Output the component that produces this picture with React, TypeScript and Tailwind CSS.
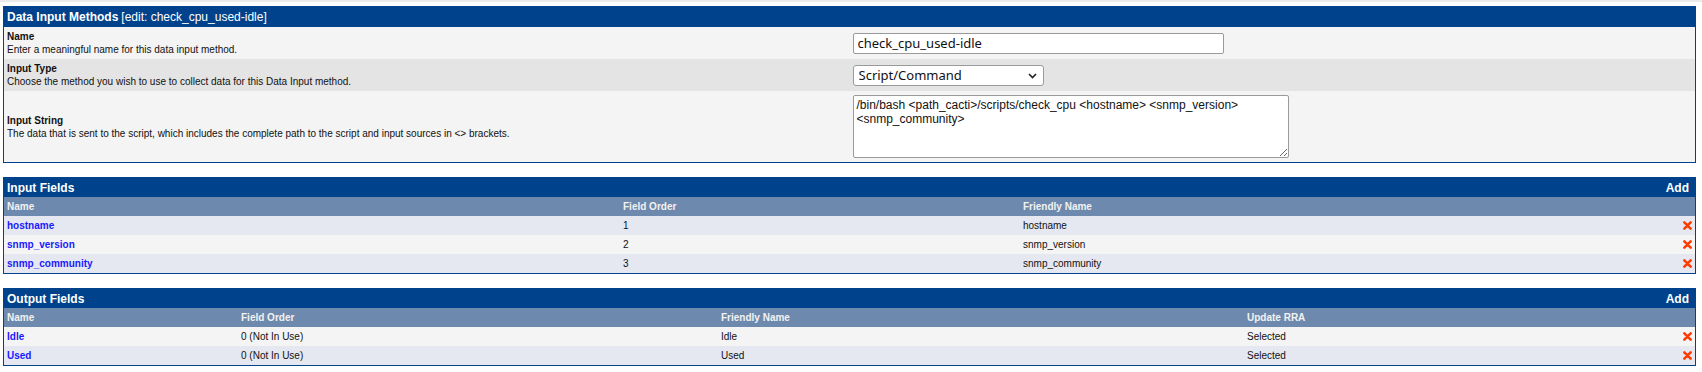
import React from 'react';

const inputFields = [
  { name: 'hostname', order: '1', friendly: 'hostname' },
  { name: 'snmp_version', order: '2', friendly: 'snmp_version' },
  { name: 'snmp_community', order: '3', friendly: 'snmp_community' },
];

const outputFields = [
  { name: 'Idle', order: '0 (Not In Use)', friendly: 'Idle', rra: 'Selected' },
  { name: 'Used', order: '0 (Not In Use)', friendly: 'Used', rra: 'Selected' },
];

function DeleteIcon() {
  return (
    <svg width="9" height="9" viewBox="0 0 10 10" className="block">
      <path d="M1.5 1.5 L8.5 8.5 M8.5 1.5 L1.5 8.5" stroke="#ff3b00" strokeWidth="2.8" strokeLinecap="round" />
    </svg>
  );
}

function PanelTitle({ children, add }: { children: React.ReactNode; add?: boolean }) {
  return (
    <div className="h-[19px] bg-[#00438c] flex items-center justify-between pl-[3px] pr-[6px] text-white text-[12px]">
      <div>{children}</div>
      {add && <span className="font-bold">Add</span>}
    </div>
  );
}

export default function App() {
  const rowBg = (i: number, startOdd: boolean) =>
    (i % 2 === 0) === startOdd ? 'bg-[#e5e8f1]' : 'bg-[#f4f4f4]';

  return (
    <div className="min-h-screen bg-white font-['Liberation_Sans',Arial,sans-serif] text-[10px] text-[#111]">
      <div className="h-[2px] bg-[#ebebeb]" />

      {/* data input method form */}
      <div className="mt-[4px] ml-[3px] mr-[6px] border border-[#00438c]">
        <div className="h-[20px] bg-[#00438c] flex items-center px-[3px] text-white text-[12px]">
          <span className="font-bold">Data Input Methods</span>
          <span className="ml-[3px]">[edit: check_cpu_used-idle]</span>
        </div>

        <div className="h-[32px] bg-[#f4f4f4] grid grid-cols-2">
          <div className="px-[3px] flex flex-col justify-center leading-[13px]">
            <span className="font-bold">Name</span>
            <span>Enter a meaningful name for this data input method.</span>
          </div>
          <div className="px-[3px] flex items-center">
            <input
              defaultValue="check_cpu_used-idle"
              className="w-[371px] h-[21px] bg-white border border-[#9a9a9a] rounded-[2px] px-[4px] text-[13px] text-[#111] font-['Noto_Sans',sans-serif] outline-none"
            />
          </div>
        </div>

        <div className="h-[32px] bg-[#e4e4e4] grid grid-cols-2">
          <div className="px-[3px] flex flex-col justify-center leading-[13px]">
            <span className="font-bold">Input Type</span>
            <span>Choose the method you wish to use to collect data for this Data Input method.</span>
          </div>
          <div className="px-[3px] flex items-center">
            <div className="relative w-[191px] h-[21px]">
              <select
                defaultValue="script"
                className="appearance-none w-full h-full bg-white border border-[#9a9a9a] rounded-[3px] pl-[5px] text-[13px] text-[#111] font-['Noto_Sans',sans-serif] outline-none"
              >
                <option value="script">Script/Command</option>
                <option value="snmp">SNMP</option>
              </select>
              <svg width="9" height="6" viewBox="0 0 9 6" className="absolute right-[7px] top-[8px] pointer-events-none">
                <path d="M1 1 L4.5 4.5 L8 1" fill="none" stroke="#222" strokeWidth="1.6" />
              </svg>
            </div>
          </div>
        </div>

        <div className="h-[71px] bg-[#f4f4f4] grid grid-cols-2">
          <div className="px-[3px] flex flex-col justify-center leading-[13px]">
            <span className="font-bold">Input String</span>
            <span>The data that is sent to the script, which includes the complete path to the script and input sources in &lt;&gt; brackets.</span>
          </div>
          <div className="px-[3px] flex items-center">
            <textarea
              defaultValue="/bin/bash <path_cacti>/scripts/check_cpu <hostname> <snmp_version> <snmp_community>"
              className="w-[436px] h-[63px] bg-white border border-[#9a9a9a] rounded-[2px] px-[3px] py-[2px] text-[12px] leading-[14px] text-[#111] font-['Liberation_Sans',Arial,sans-serif] outline-none"
            />
          </div>
        </div>
      </div>

      {/* input fields */}
      <div className="mt-[14px] ml-[3px] mr-[6px] border border-[#00438c]">
        <PanelTitle add>
          <span className="font-bold">Input Fields</span>
        </PanelTitle>
        <div className="h-[19px] bg-[#6d89ad] grid grid-cols-[616px_400px_1fr_16px] items-center text-[#f2f2f2] font-bold">
          <div className="pl-[3px]">Name</div>
          <div className="pl-[3px]">Field Order</div>
          <div className="pl-[3px]">Friendly Name</div>
          <div />
        </div>
        {inputFields.map((f, i) => (
          <div key={f.name} className={`h-[19px] grid grid-cols-[616px_400px_1fr_16px] items-center ${rowBg(i, true)}`}>
            <div className="pl-[3px]">
              <a href="#" className="font-bold text-[#1a1aff]">{f.name}</a>
            </div>
            <div className="pl-[3px]">{f.order}</div>
            <div className="pl-[3px]">{f.friendly}</div>
            <div className="flex justify-end pr-[3px]">
              <DeleteIcon />
            </div>
          </div>
        ))}
      </div>

      {/* output fields */}
      <div className="mt-[14px] ml-[3px] mr-[6px] border border-[#00438c]">
        <PanelTitle add>
          <span className="font-bold">Output Fields</span>
        </PanelTitle>
        <div className="h-[19px] bg-[#6d89ad] grid grid-cols-[234px_480px_526px_1fr_16px] items-center text-[#f2f2f2] font-bold">
          <div className="pl-[3px]">Name</div>
          <div className="pl-[3px]">Field Order</div>
          <div className="pl-[3px]">Friendly Name</div>
          <div className="pl-[3px]">Update RRA</div>
          <div />
        </div>
        {outputFields.map((f, i) => (
          <div key={f.name} className={`h-[19px] grid grid-cols-[234px_480px_526px_1fr_16px] items-center ${rowBg(i, false)}`}>
            <div className="pl-[3px]">
              <a href="#" className="font-bold text-[#1a1aff]">{f.name}</a>
            </div>
            <div className="pl-[3px]">{f.order}</div>
            <div className="pl-[3px]">{f.friendly}</div>
            <div className="pl-[3px]">{f.rra}</div>
            <div className="flex justify-end pr-[3px]">
              <DeleteIcon />
            </div>
          </div>
        ))}
      </div>
    </div>
  );
}
